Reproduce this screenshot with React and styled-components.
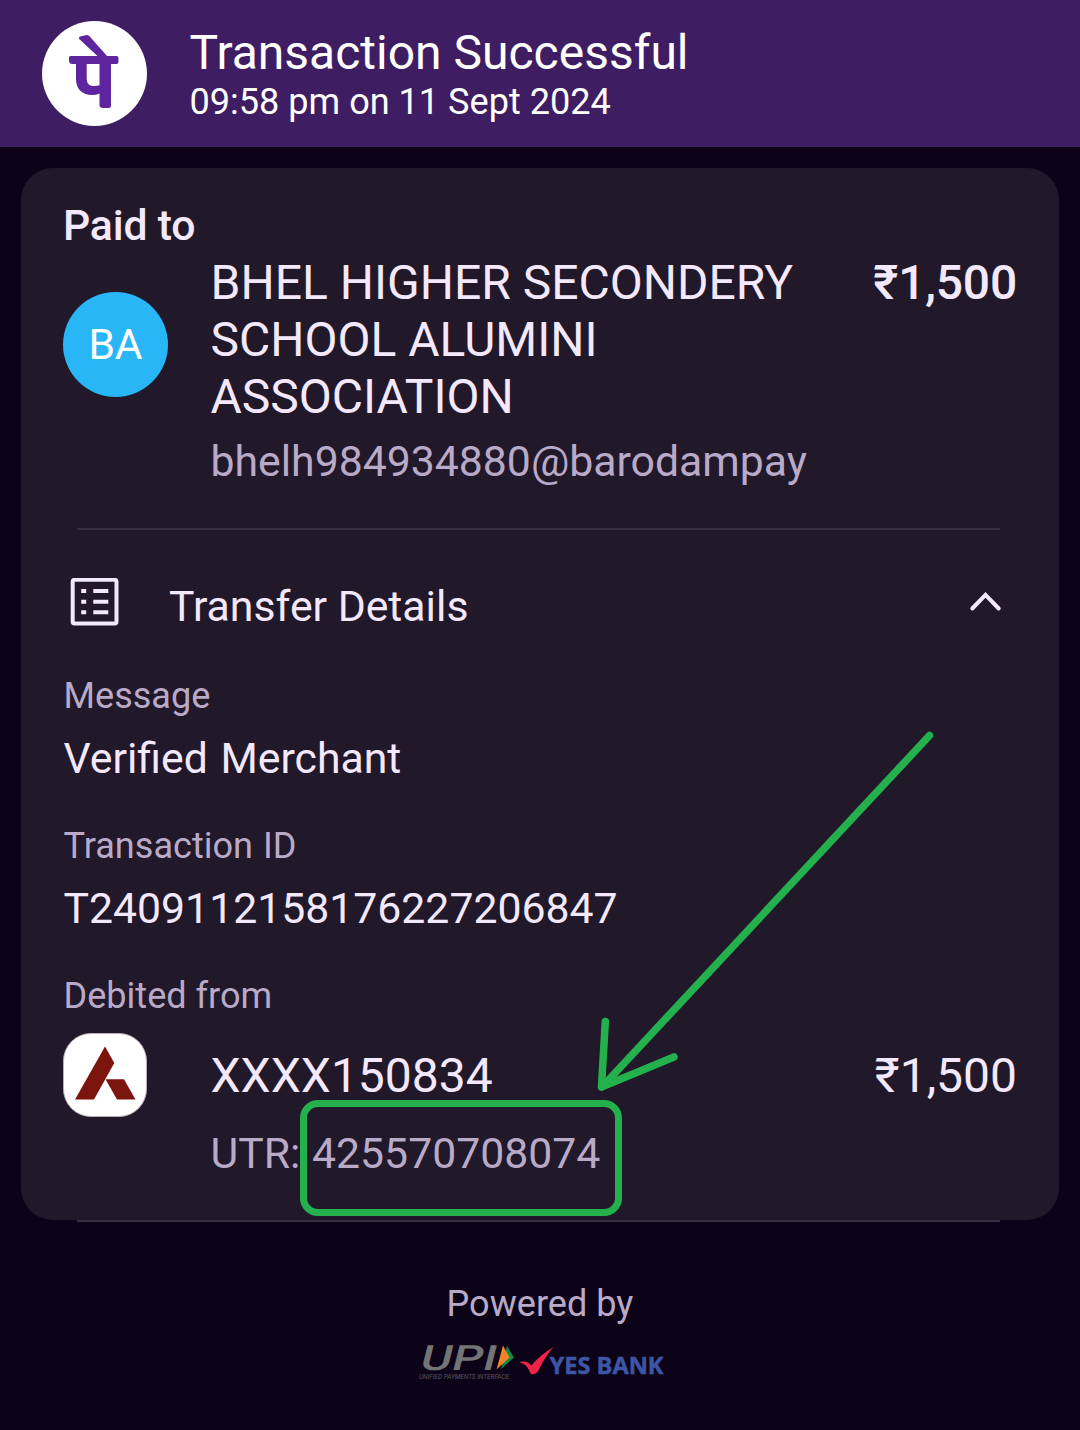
import React from "react";
import styled, { createGlobalStyle, css } from "styled-components";

const GlobalStyle = createGlobalStyle`
  *, *::before, *::after { box-sizing: border-box; }
  body { margin: 0; background: #0d0318; font-family: Roboto, "Noto Sans", sans-serif; }
`;

const Screen = styled.div`
  width: 1080px;
  height: 1430px;
  overflow: hidden;
  display: flex;
  flex-direction: column;
  background: #0d0318;
  color: #f3e8fc;
`;

const Header = styled.header`
  height: 147px;
  flex: none;
  display: flex;
  align-items: flex-start;
  gap: 42px;
  padding: 21px 42px;
  background: #3f1d63;
  color: #fff;
`;

const HeaderText = styled.div`
  display: flex;
  flex-direction: column;
  padding: 3px 0 0 0.5px;
`;

const sizes = {
  large: css`font-size: 48px; line-height: 57px;`,
  medium: css`font-size: 42.75px; line-height: 50px;`,
  small: css`font-size: 36.1px; line-height: 42px;`,
};

const Text = styled.div`
  ${(p) => sizes[p.$size]}
  font-weight: ${(p) => p.$weight || 400};
  letter-spacing: ${(p) => (p.$tight ? "-0.2px" : "normal")};
  word-spacing: ${(p) => p.$gap || 0}px;
  color: ${(p) => (p.$muted ? "#b9aac8" : "inherit")};
  white-space: nowrap;
`;

const Card = styled.main`
  position: relative;
  height: 1052px;
  flex: none;
  display: flex;
  flex-direction: column;
  margin: 21px 21px 0;
  padding: 32px 42px 0;
  border-radius: 32px;
  background: #21182a;
`;

const PayeeRow = styled.div`
  display: flex;
  align-items: flex-start;
  padding-top: 4px;
`;

const Avatar = styled.div`
  width: 105px;
  height: 105px;
  margin: 38px 42.5px 0 0;
  display: flex;
  align-items: center;
  justify-content: center;
  border-radius: 50%;
  background: #29b6f6;
  color: #fff;
  font-size: 42.5px;
`;

const Details = styled.div`
  flex: 1;
  display: flex;
  flex-direction: column;
  gap: ${(p) => p.$gap}px;
`;

const Divider = styled.hr`
  width: 923px;
  height: 2px;
  flex: none;
  margin: ${(p) => p.$top}px 0 0 ${(p) => p.$left}px;
  border: 0;
  background: #383041;
`;

const SectionHead = styled.div`
  display: flex;
  align-items: flex-start;
  height: 50px;
  margin-top: 48px;
  padding-left: 7px;
  padding-right: 15px;
`;

const SectionTitle = styled.div`
  flex: 1;
  padding: 3px 0 0 50px;
`;

const Field = styled.div`
  display: flex;
  flex-direction: column;
  gap: 16px;
  margin-top: ${(p) => p.$top}px;
  padding-left: 0.5px;
`;

const DebitRow = styled.div`
  display: flex;
  align-items: flex-start;
  margin-top: 16px;
`;

const BankBadge = styled.div`
  width: 84px;
  height: 84px;
  margin-right: 63.5px;
  border: 1px solid #b5b0b8;
  border-radius: 28px;
  background: #fff;
  overflow: hidden;

  svg {
    display: block;
    margin: -1px;
  }
`;

const DebitLine = styled.div`
  display: flex;
  flex: 1;
  justify-content: space-between;
  padding-top: 14px;
`;

const Highlight = styled.div`
  position: absolute;
  left: 279px;
  top: 932px;
  width: 322px;
  height: 116px;
  border: 7px solid #24b14d;
  border-radius: 18px;
`;

const Arrow = styled.svg`
  position: absolute;
  left: 569px;
  top: 557px;
`;

const Footer = styled.footer`
  display: flex;
  flex-direction: column;
  align-items: center;
  gap: 17px;
  padding-top: 61px;
`;

const LogoStrip = styled.svg`
  overflow: visible;
`;

const PhonePeLogo = () => (
  <svg width="105" height="105" viewBox="42 21 105 105">
    <circle cx="94.5" cy="73.500" r="52.500" fill="#fff" />
    <g fill="#5f259f">
      <path d="M79 38Q79 36.900 80 36.600L85.500 35.200Q88 34.700 89.500 36.300L107.500 56.500H98L79.500 39.300Z" />
      <path
        d="M70.500 56H116.500Q118.500 56 118.500 58V61.500Q118.500 64 116.500 64H111V105.500Q111 108 108.500 108H103Q99.500 108 99.500 105V93.500Q96 95 92.500 95C82 95 76 89 76 79V64H72.500Q69 64 69 60.500V57.500Q69 56 70.500 56ZM86.700 64V78C86.700 83.500 89 86 94 86Q97 86 99.500 85.300V64Z"
        fillRule="evenodd"
      />
    </g>
  </svg>
);

const ListIcon = () => (
  <svg width="49" height="49" viewBox="70 578 49 49" fill="none" stroke="#f3e8fc">
    <rect x="72.700" y="579.800" width="43.800" height="43.800" rx="1.800" strokeWidth="4" />
    <path
      d="M81.200 591H86.200M93.300 591H108.300M81.200 601.700H86.200M93.300 601.700H108.300M81.200 612.200H86.200M93.300 612.200H108.300"
      strokeWidth="4"
    />
  </svg>
);

const Chevron = () => (
  <svg width="33" height="50" viewBox="969 578 33 50" fill="none" stroke="#f3e8fc" strokeWidth="4" strokeLinecap="round">
    <path d="M972.300 608.500L985.500 594.800L998.700 608.500" />
  </svg>
);

const AxisMark = () => (
  <svg width="84" height="84" viewBox="63 1033 84 84" fill="#7b150e">
    <path d="M105 1046.500L114.300 1063L94 1099.500H75Z" />
    <path d="M105.500 1079.300H124L135.500 1099.500H117Z" />
  </svg>
);

const PartnerLogos = () => (
  <LogoStrip width="244" height="40" viewBox="418 1342 244 40">
    <g transform="translate(418.500 1370) skewX(-14)">
      <text x="0" y="0" fontFamily="Roboto, sans-serif" fontSize="35" fontWeight="500" fill="#747376" textLength="76" lengthAdjust="spacingAndGlyphs">UPI</text>
    </g>
    <path d="M507 1346L514 1357.500L501 1369Z" fill="#108a43" />
    <path d="M503 1345.500L509.500 1357.500L496.500 1369.500Z" fill="#f58229" />
    <text x="419" y="1379" fontFamily="Roboto, sans-serif" fontSize="6.500" fontStyle="italic" fill="#5b5661" textLength="90" lengthAdjust="spacingAndGlyphs">UNIFIED PAYMENTS INTERFACE</text>
    <path d="M519 1362.500C523.500 1360.500 528 1361.500 531.500 1365.500C538 1357.500 545 1352 553.500 1347C547 1354.500 543 1361.500 538 1371.500Q534 1375.500 530.500 1373.500C528 1367 525.500 1363.500 519 1362.500Z" fill="#ed2348" />
    <text x="549.500" y="1373.800" fontFamily='"Open Sans", sans-serif' fontSize="23.500" fontWeight="700" fill="#3c56a5" stroke="#3c56a5" strokeWidth="0.500" textLength="114" lengthAdjust="spacingAndGlyphs">YES BANK</text>
  </LogoStrip>
);

export default function App() {
  return (
    <>
      <GlobalStyle />
      <Screen>
        <Header>
          <PhonePeLogo />
          <HeaderText>
            <Text $size="large">Transaction Successful</Text>
            <Text $size="small">09:58 pm on 11 Sept 2024</Text>
          </HeaderText>
        </Header>
        <Card>
          <Text $size="medium" $weight={500} $tight>Paid to</Text>
          <PayeeRow>
            <Avatar>BA</Avatar>
            <Details $gap={11}>
              <Text $size="large">
                BHEL HIGHER SECONDERY<br />SCHOOL ALUMINI<br />ASSOCIATION
              </Text>
              <Text $size="medium" $muted>bhelh984934880@barodampay</Text>
            </Details>
            <Text $size="large" $weight={500} $tight>₹1,500</Text>
          </PayeeRow>
          <Divider $top={42} $left={14} />
          <SectionHead>
            <ListIcon />
            <SectionTitle>
              <Text $size="medium">Transfer Details</Text>
            </SectionTitle>
            <Chevron />
          </SectionHead>
          <Field $top={47}>
            <Text $size="small" $muted>Message</Text>
            <Text $size="medium" $gap={2}>Verified Merchant</Text>
          </Field>
          <Field $top={42}>
            <Text $size="small" $muted $gap={1}>Transaction ID</Text>
            <Text $size="medium">T2409112158176227206847</Text>
          </Field>
          <Field $top={42}>
            <Text $size="small" $muted>Debited from</Text>
          </Field>
          <DebitRow>
            <BankBadge><AxisMark /></BankBadge>
            <Details $gap={24}>
              <DebitLine>
                <Text $size="large">XXXX150834</Text>
                <Text $size="large">₹1,500</Text>
              </DebitLine>
              <Text $size="medium" $muted $gap={1}>UTR: 425570708074</Text>
            </Details>
          </DebitRow>
          <Highlight />
          <Arrow width="350" height="370" viewBox="590 725 350 370" fill="none" stroke="#24b14d" strokeWidth="7.500" strokeLinecap="round" strokeLinejoin="round">
            <path d="M929.500 735.500L602 1087M605.300 1021.500L601.500 1087L674 1057" />
          </Arrow>
        </Card>
        <Divider $top={0} $left={77} />
        <Footer>
          <Text $size="small" $muted>Powered by</Text>
          <PartnerLogos />
        </Footer>
      </Screen>
    </>
  );
}
